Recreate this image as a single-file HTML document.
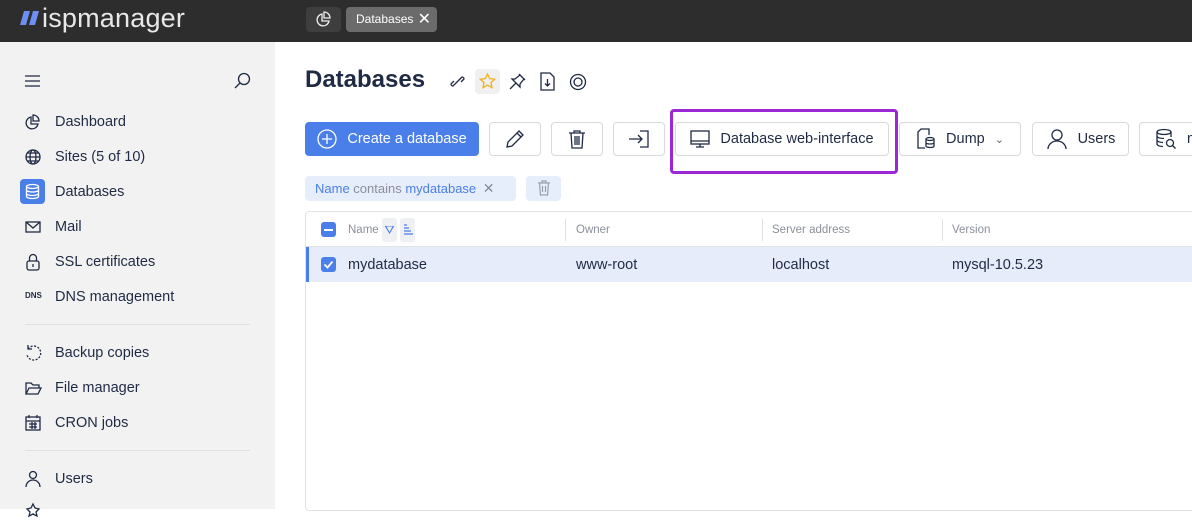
<!DOCTYPE html>
<html><head><style>
*{box-sizing:border-box;margin:0;padding:0}
body{width:1192px;height:509px;overflow:hidden;font-family:"Liberation Sans",sans-serif;color:#1f2a44;background:#fff;position:relative}
.abs{position:absolute}
.top{left:0;top:0;width:1192px;height:42px;background:#2d2d2d}
.side{left:0;top:42px;width:275px;height:467px;background:#f2f2f2}
.item{position:absolute;left:55px;font-size:14.5px;color:#1f2a44}
.ic{position:absolute;left:24px;width:18px;height:18px}
.btn{position:absolute;top:122px;height:34px;border:1px solid #d6d9de;border-radius:4px;background:#fff;font-size:14.5px;display:flex;align-items:center;justify-content:center;gap:10px}
.hd{position:absolute;top:224px;font-size:11.5px;color:#8a8f99}
.sep{position:absolute;top:219px;width:1px;height:22px;background:#e0e2e6}
.cell{position:absolute;top:257px;font-size:14.5px}
</style></head><body>
<div class="abs top"></div>
<svg class="abs" style="left:20px;top:11px" width="20" height="14"><path d="M4 0h6l-4 14H0zM13 0h6l-4 14H9z" fill="#6d8ff0"/></svg>
<div class="abs" style="left:42px;top:3px;font-size:27px;color:#e8e8e8;letter-spacing:0.2px">ispmanager</div>
<div class="abs" style="left:306px;top:7px;width:35px;height:25px;background:#3e3e3e;border-radius:4px"></div>
<svg class="abs" style="left:315px;top:11px" width="17" height="17" fill="none" stroke="#eee" stroke-width="1.3"><path d="M7 3a6 6 0 1 0 7 7H7z"/><path d="M9 1v6h6a6 6 0 0 0-6-6z"/></svg>
<div class="abs" style="left:346px;top:7px;width:91px;height:25px;background:#6b6b6b;border-radius:4px;color:#fff;font-size:12px;line-height:25px;padding-left:10px">Databases <span style="font-size:16px;position:absolute;right:6px;top:0">✕</span></div>

<div class="abs side"></div>
<svg class="abs" style="left:25px;top:75px" width="16" height="12" stroke="#1f2a44" stroke-width="1.2"><path d="M0 1h15M0 6h15M0 11h15"/></svg>
<svg class="abs" style="left:233px;top:72px" width="18" height="18" fill="none" stroke="#1f2a44" stroke-width="1.3"><circle cx="11" cy="7" r="5.5"/><path d="M7 11l-5 5"/></svg>

<svg class="ic" style="top:113px" fill="none" stroke="#1f2a44" stroke-width="1.3"><path d="M7 4a6 6 0 1 0 7 7H7z"/><path d="M9 2v6h6a6 6 0 0 0-6-6z"/></svg>
<div class="item" style="top:114px">Dashboard</div>
<svg class="ic" style="top:148px" fill="none" stroke="#1f2a44" stroke-width="1.3"><circle cx="9" cy="9" r="7"/><ellipse cx="9" cy="9" rx="3" ry="7"/><path d="M2 9h14M3 5h12M3 13h12"/></svg>
<div class="item" style="top:149px">Sites (5 of 10)</div>
<div class="abs" style="left:20px;top:179px;width:25px;height:25px;background:#4a7ee8;border-radius:4px"></div>
<svg class="abs" style="left:24px;top:183px" width="17" height="17" fill="none" stroke="#fff" stroke-width="1.3"><ellipse cx="8.5" cy="3.5" rx="6" ry="2"/><path d="M2.5 3.5v10c0 1 2.7 2 6 2s6-1 6-2v-10M2.5 7c0 1 2.7 2 6 2s6-1 6-2M2.5 10.5c0 1 2.7 2 6 2s6-1 6-2"/></svg>
<div class="item" style="top:184px">Databases</div>
<svg class="ic" style="top:218px" fill="none" stroke="#1f2a44" stroke-width="1.3"><rect x="2" y="4" width="14" height="10"/><path d="M2 4l7 6 7-6"/></svg>
<div class="item" style="top:219px">Mail</div>
<svg class="ic" style="top:253px" fill="none" stroke="#1f2a44" stroke-width="1.3"><rect x="3" y="8" width="12" height="9" rx="2"/><path d="M5.5 8V5a3.5 3.5 0 0 1 7 0v3M9 11v3"/></svg>
<div class="item" style="top:254px">SSL certificates</div>
<div class="abs" style="left:25px;top:291px;font-size:8px;font-weight:bold">DNS</div>
<div class="item" style="top:289px">DNS management</div>
<div class="abs" style="left:25px;top:324px;width:225px;height:1px;background:#e0e0e0"></div>
<svg class="ic" style="top:344px" fill="none" stroke="#1f2a44" stroke-width="1.3"><path d="M4 5a7 7 0 1 1-1 6" stroke-dasharray="2 1.5"/><path d="M4 1v4h4"/></svg>
<div class="item" style="top:345px">Backup copies</div>
<svg class="ic" style="top:379px" fill="none" stroke="#1f2a44" stroke-width="1.3"><path d="M2 15V4h5l2 2h6v3M2 15l3-6h12l-3 6z"/></svg>
<div class="item" style="top:380px">File manager</div>
<svg class="ic" style="top:414px" fill="none" stroke="#1f2a44" stroke-width="1.3"><rect x="2" y="3" width="14" height="13"/><path d="M2 7h14M5 1v3M13 1v3M5 10h8M5 13h8M8 8v7M11 8v7"/></svg>
<div class="item" style="top:415px">CRON jobs</div>
<div class="abs" style="left:25px;top:450px;width:225px;height:1px;background:#e0e0e0"></div>
<svg class="ic" style="top:470px" fill="none" stroke="#1f2a44" stroke-width="1.3"><circle cx="9" cy="5" r="3.5"/><path d="M2 17a7 7 0 0 1 14 0"/></svg>
<div class="item" style="top:471px">Users</div>
<svg class="ic" style="top:502px" fill="none" stroke="#1f2a44" stroke-width="1.3"><path d="M9 2l2 4 4 1-3 3 1 4-4-2-4 2 1-4-3-3 4-1z"/></svg>

<div class="abs" style="left:305px;top:66px;font-size:24px;font-weight:bold;color:#1f2a44">Databases</div>
<svg class="abs" style="left:449px;top:73px" width="17" height="17" fill="none" stroke="#1f2a44" stroke-width="1.3"><path d="M7 10l-3 3a2 2 0 0 1-2-2l3-3M10 7l3-3a2 2 0 0 1 2 2l-3 3M6 11l5-5"/></svg>
<div class="abs" style="left:475px;top:69px;width:25px;height:25px;background:#f0f0f0;border-radius:4px"></div>
<svg class="abs" style="left:478px;top:72px" width="19" height="19" fill="none" stroke="#f2b01e" stroke-width="1.3"><path d="M9.5 2l2.2 4.6 5 .6-3.7 3.4 1 5-4.5-2.5L5 15.6l1-5L2.3 7.2l5-.6z"/></svg>
<svg class="abs" style="left:509px;top:73px" width="17" height="17" fill="none" stroke="#1f2a44" stroke-width="1.3"><path d="M10 1l6 6M11 2l-5 4-3 0 8 8 0-3 4-5M7 10l-6 6"/></svg>
<svg class="abs" style="left:539px;top:72px" width="17" height="19" fill="none" stroke="#1f2a44" stroke-width="1.3"><path d="M2 1h9l4 4v13H2zM8.5 7v7M6 11.5l2.5 2.5 2.5-2.5"/></svg>
<svg class="abs" style="left:569px;top:73px" width="18" height="18" fill="none" stroke="#1f2a44" stroke-width="1.3"><circle cx="9" cy="9" r="7.5"/><circle cx="9" cy="9" r="4"/></svg>

<div class="btn" style="left:305px;width:174px;background:#4a7ee8;border-color:#4a7ee8;color:#fff">
<svg width="20" height="20" fill="none" stroke="#fff" stroke-width="1.3"><circle cx="10" cy="10" r="9"/><path d="M10 5v10M5 10h10"/></svg>Create a database</div>
<div class="btn" style="left:489px;width:52px"><svg width="20" height="20" fill="none" stroke="#1f2a44" stroke-width="1.3"><path d="M14 2l4 4L7 17l-5 1 1-5zM12 4l4 4"/></svg></div>
<div class="btn" style="left:551px;width:52px"><svg width="18" height="20" fill="none" stroke="#1f2a44" stroke-width="1.3"><path d="M1 4h16M6 4V2h6v2M3 4l1 15h10l1-15M7 7v9M9 7v9M11 7v9"/></svg></div>
<div class="btn" style="left:613px;width:52px"><svg width="22" height="20" fill="none" stroke="#1f2a44" stroke-width="1.3"><path d="M12 2h8v16h-8M1 10h13M10 6l4 4-4 4"/></svg></div>
<div class="btn" style="left:675px;width:214px"><svg width="20" height="20" fill="none" stroke="#1f2a44" stroke-width="1.3"><rect x="1" y="2" width="18" height="13"/><path d="M1 12h18M10 15v3M6 18h8"/></svg>Database web-interface</div>
<div class="abs" style="left:670px;top:109px;width:228px;height:65px;border:3px solid #9b27d6;border-radius:4px"></div>
<div class="btn" style="left:899px;width:122px"><svg width="20" height="22" fill="none" stroke="#1f2a44" stroke-width="1.3"><path d="M9 20H2V4l3-3h8v6"/><ellipse cx="14" cy="11" rx="4" ry="1.5"/><path d="M10 11v7c0 1 2 1.5 4 1.5s4-.5 4-1.5v-7M10 14.5c0 1 2 1.5 4 1.5s4-.5 4-1.5"/></svg>Dump <span style="font-size:11px;color:#666">&#8964;</span></div>
<div class="btn" style="left:1032px;width:97px"><svg width="22" height="22" fill="none" stroke="#1f2a44" stroke-width="1.3"><circle cx="11" cy="7" r="5"/><path d="M2 21a9 8 0 0 1 18 0"/></svg>Users</div>
<div class="btn" style="left:1139px;width:80px;justify-content:flex-start;padding-left:15px"><svg width="22" height="22" fill="none" stroke="#1f2a44" stroke-width="1.3"><ellipse cx="9" cy="4" rx="7" ry="2.5"/><path d="M2 4v12c0 1.5 3 2.5 6 2.5M16 4v5M2 8c0 1.5 3 2.5 7 2.5M2 12c0 1.5 3 2.5 6 2.5"/><circle cx="15" cy="15" r="3.5"/><path d="M17.5 17.5l3 3"/></svg>m</div>

<div class="abs" style="left:305px;top:176px;width:211px;height:25px;background:#e6edfb;border-radius:4px;font-size:13px;line-height:25px;padding-left:10px;color:#4a7ee8">Name <span style="color:#8a8f99">contains</span> mydatabase <span style="color:#8a8f99;font-size:14px;margin-left:3px">✕</span></div>
<div class="abs" style="left:526px;top:176px;width:35px;height:25px;background:#e6edfb;border-radius:4px"></div>
<svg class="abs" style="left:537px;top:180px" width="14" height="16" fill="none" stroke="#9aa0aa" stroke-width="1.2"><path d="M1 3h12M5 3V1h4v2M2.5 3l1 12h7l1-12M5.5 6v6M8.5 6v6"/></svg>

<div class="abs" style="left:305px;top:211px;width:900px;height:300px;border:1px solid #dfe1e5;border-radius:4px"></div>
<div class="abs" style="left:306px;top:246px;width:886px;height:1px;background:#dfe1e5"></div>
<div class="abs" style="left:321px;top:222px;width:15px;height:15px;background:#4a7ee8;border-radius:3px"></div>
<div class="abs" style="left:324px;top:229px;width:9px;height:2px;background:#fff"></div>
<div class="hd" style="left:348px">Name</div>
<div class="abs" style="left:382px;top:218px;width:15px;height:24px;background:#eef0f3;border-radius:3px;color:#4a7ee8;font-size:12px;text-align:center;line-height:24px">⛛</div>
<div class="abs" style="left:400px;top:218px;width:15px;height:24px;background:#eef0f3;border-radius:3px"></div>
<svg class="abs" style="left:403px;top:224px" width="10" height="12" stroke="#4a7ee8" stroke-width="1.2"><path d="M1 1h3M1 4h5M1 7h7M1 10h9"/></svg>
<div class="sep" style="left:565px"></div><div class="hd" style="left:576px">Owner</div>
<div class="sep" style="left:762px"></div><div class="hd" style="left:772px">Server address</div>
<div class="sep" style="left:942px"></div><div class="hd" style="left:952px">Version</div>
<div class="abs" style="left:306px;top:247px;width:886px;height:35px;background:#e6ecfa"></div>
<div class="abs" style="left:306px;top:247px;width:3px;height:35px;background:#4a7ee8"></div>
<div class="abs" style="left:321px;top:257px;width:15px;height:15px;background:#4a7ee8;border-radius:3px"></div>
<svg class="abs" style="left:323px;top:259px" width="11" height="11" fill="none" stroke="#fff" stroke-width="1.8"><path d="M1.5 5.5l3 3 5-6"/></svg>
<div class="cell" style="left:348px">mydatabase</div>
<div class="cell" style="left:576px">www-root</div>
<div class="cell" style="left:772px">localhost</div>
<div class="cell" style="left:952px">mysql-10.5.23</div>
</body></html>
